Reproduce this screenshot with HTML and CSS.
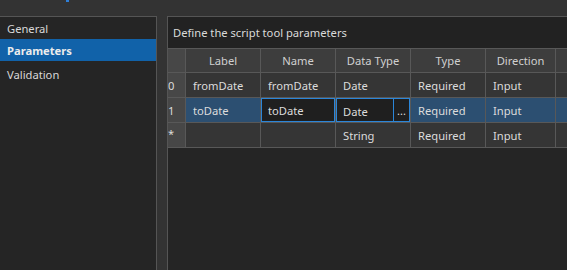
FILE: index.html
```html
<!DOCTYPE html>
<html lang="en">
<head>
  <meta charset="UTF-8" />
  <title>Script Tool Parameters</title>
  <link rel="stylesheet" href="styles.css">
</head>
<body>

<!-- Title strip (clipped) -->
<div class="topbar"><span class="top-mark"></span></div>

<div class="main">
  <!-- Side nav -->
  <nav class="sidebar">
    <div class="nav-item">General</div>
    <div class="nav-item active">Parameters</div>
    <div class="nav-item">Validation</div>
  </nav>

  <!-- Parameter grid -->
  <section class="panel">
    <div class="panel-title">Define the script tool parameters</div>
    <div class="grid">
      <div class="cell head rowhead"></div>
      <div class="cell head">Label</div>
      <div class="cell head">Name</div>
      <div class="cell head">Data Type</div>
      <div class="cell head">Type</div>
      <div class="cell head">Direction</div>
      <div class="cell head"></div>

      <div class="cell rowhead">0</div>
      <div class="cell">fromDate</div>
      <div class="cell">fromDate</div>
      <div class="cell">Date</div>
      <div class="cell">Required</div>
      <div class="cell">Input</div>
      <div class="cell"></div>

      <div class="cell rowhead">1</div>
      <div class="cell sel">toDate</div>
      <div class="cell sel"><div class="editor">toDate</div></div>
      <div class="cell sel">
        <div class="editor split">
          <span class="edit-text">Date</span>
          <span class="ellipsis">...</span>
        </div>
      </div>
      <div class="cell sel">Required</div>
      <div class="cell sel">Input</div>
      <div class="cell sel"></div>

      <div class="cell rowhead star">*</div>
      <div class="cell"></div>
      <div class="cell"></div>
      <div class="cell">String</div>
      <div class="cell">Required</div>
      <div class="cell">Input</div>
      <div class="cell"></div>
    </div>
  </section>
</div>

</body>
</html>
```

FILE: styles.css
```css
* {
  box-sizing: border-box;
}

html, body {
  margin: 0;
  padding: 0;
  width: 567px;
  height: 270px;
  overflow: hidden;
  background-color: #333333;
  font-family: "Noto Sans", sans-serif;
  font-size: 11.2px;
  color: #dcdcdc;
}

.topbar {
  height: 16px;
  padding-left: 66px;
}

.top-mark {
  display: block;
  width: 3px;
  height: 2px;
  background-color: #2f7fd8;
}

.main {
  display: flex;
  gap: 10px;
  height: 254px;
}

.sidebar {
  width: 157px;
  flex: 0 0 157px;
  background-color: #252525;
  border-top: 1px solid #555;
  border-right: 1px solid #555;
}

.nav-item {
  height: 22px;
  line-height: 22px;
  padding-top: 1px;
  padding-left: 7px;
  color: #d8d8d8;
}

.nav-item:last-child {
  padding-top: 3px;
}

.nav-item.active {
  background-color: #1162a9;
  color: #ececec;
  font-weight: bold;
}

.panel {
  flex: 1;
  min-width: 0;
  background-color: #252525;
  border-top: 1px solid #555;
  border-left: 1px solid #555;
}

.panel-title {
  height: 31px;
  line-height: 31px;
  padding-left: 5px;
  background-color: #222;
  color: #dadada;
}

.grid {
  display: grid;
  grid-template-columns: 17px 74px 74px 74px 74px 69px 1fr;
  grid-auto-rows: 24px;
  grid-template-rows: 23px;
  gap: 1px;
  background-color: #585858;
  border-top: 1px solid #585858;
  border-bottom: 1px solid #585858;
}

.cell {
  background-color: #353535;
  line-height: 25px;
  padding-left: 7px;
  white-space: nowrap;
  overflow: hidden;
}

.cell.head {
  background-color: #3d3d3d;
  line-height: 23px;
  text-align: center;
  padding-left: 0;
  color: #d0d0d0;
}

.cell.rowhead {
  background-color: #474747;
  padding-left: 0;
  text-align: left;
}

.cell.star {
  line-height: 22px;
  font-size: 11px;
}

.cell.sel {
  background-color: #2c4f71;
}

.cell:has(.editor) {
  padding-left: 0;
}

.editor {
  height: 24px;
  line-height: 23px;
  padding-left: 6px;
  background-color: #1f1f1f;
  border: 1px solid #2b86d9;
}

.editor.split {
  display: flex;
  padding-left: 0;
}

.edit-text {
  flex: 1;
  padding-left: 6px;
  padding-top: 1px;
}

.ellipsis {
  width: 16px;
  border-left: 1px solid #2b86d9;
  text-align: center;
  font-size: 11px;
}
```
